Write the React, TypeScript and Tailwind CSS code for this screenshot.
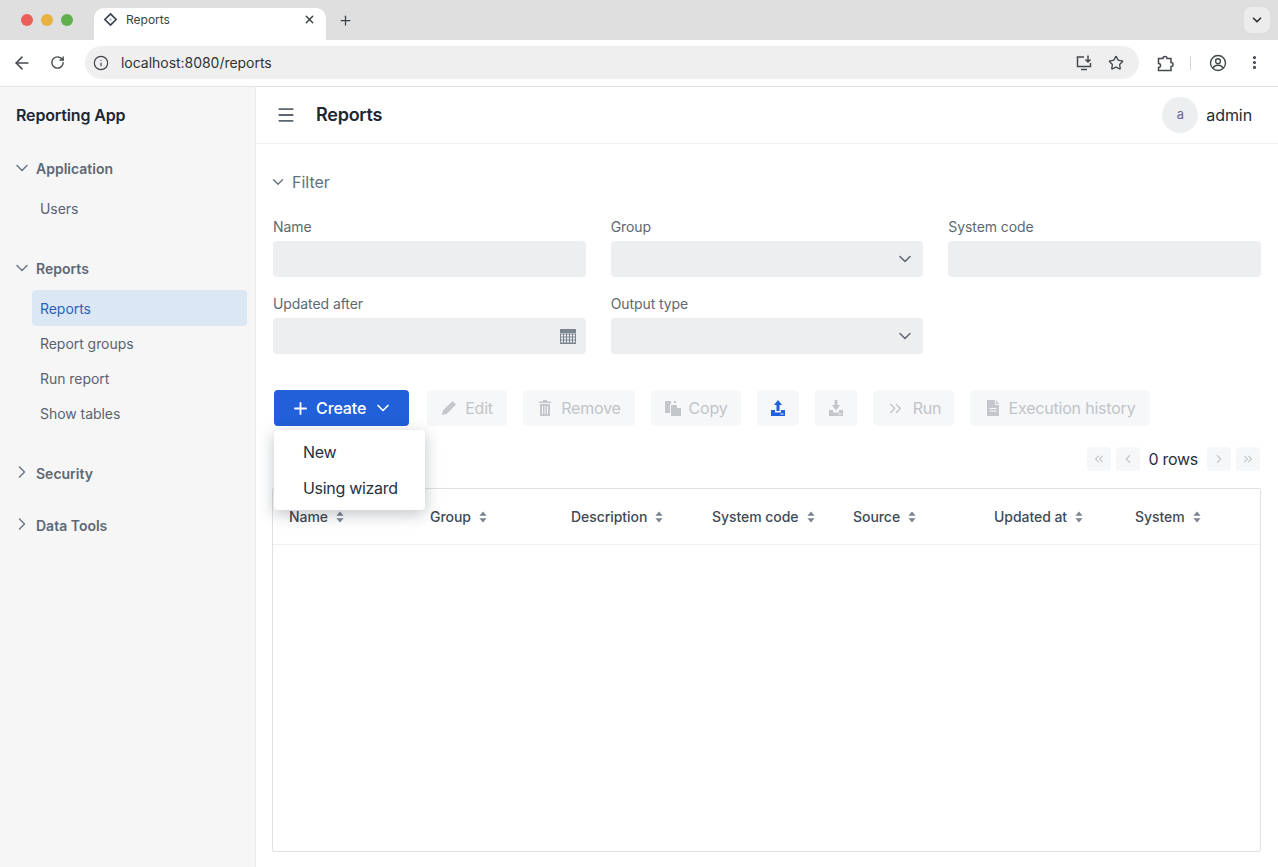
import React from "react";
import { ArrowLeft, RotateCw, Info, Star, EllipsisVertical, X, Plus, ChevronDown, ChevronRight, ChevronLeft, ChevronsLeft, ChevronsRight, Menu } from "lucide-react";

const Caret = ({ c = "" }: { c?: string }) => (
  <svg viewBox="0 0 8 12" className={"w-[8px] h-[12px] " + c} fill="#7b8591">
    <path d="M4 0.5 L7.6 4.8 H0.4 Z" />
    <path d="M4 11.5 L7.6 7.2 H0.4 Z" />
  </svg>
);

const NavGroup = ({ label, open, className = "" }: { label: string; open?: boolean; className?: string }) => (
  <div className={"flex items-center h-[24px] pl-[12px] " + className}>
    {open ? (
      <ChevronDown size={20} strokeWidth={1.75} className="text-[#6b7684] mr-[4px] shrink-0" />
    ) : (
      <ChevronRight size={20} strokeWidth={1.75} className="text-[#6b7684] mr-[4px] shrink-0 -mt-[3px]" />
    )}
    <span className="text-[14px] font-semibold text-[#5d6875]">{label}</span>
  </div>
);

const NavItem = ({ label, active }: { label: string; active?: boolean }) => (
  <div className={"ml-[32px] mr-[8px] pl-[8px] flex items-center rounded-[4px] text-[14px] tracking-[-0.05px] h-[36px] mb-[-1px] " + (active ? "bg-[#dce7f6] text-[#2b62bd]" : "text-[#59636f]")}>
    {label}
  </div>
);

const Field = ({ label, icon }: { label: string; icon?: React.ReactNode }) => (
  <div>
    <div className="text-[14px] leading-[20px] h-[24px] text-[#5e6874] tracking-[-0.08px]">{label}</div>
    <div className="h-[36px] bg-[#eceef0] rounded-[4px] flex items-center justify-end pr-[8px]">{icon}</div>
  </div>
);

const Calendar = () => (
  <svg viewBox="0 0 16 16" className="w-[16px] h-[16px] mr-[2px]" fill="#7c8590">
    <path d="M0 1h16v4H0z" />
    <path fillRule="evenodd" d="M0 5.5h16V16H0zM1 6.5v2h2v-2zm3 0v2h2v-2zm3 0v2h2v-2zm3 0v2h2v-2zm3 0v2h2v-2zM1 9.5v2h2v-2zm3 0v2h2v-2zm3 0v2h2v-2zm3 0v2h2v-2zm3 0v2h2v-2zM1 12.5v2h2v-2zm3 0v2h2v-2zm3 0v2h2v-2zm3 0v2h2v-2zm3 0v2h2v-2z" />
  </svg>
);

const Pen = () => (
  <svg viewBox="0 0 16 16" className="w-[16px] h-[16px]" fill="#c3c7cc"><path d="M11.5 1 15 4.5 5.5 14 1 15l1-4.5z" /></svg>
);
const Trash = () => (
  <svg viewBox="0 0 16 16" className="w-[16px] h-[16px]" fill="#c3c7cc"><path d="M6 0h4v1.5h4V3H2V1.5h4z" /><path fillRule="evenodd" d="M3 4h10v12H3zm2 2v8h1V6zm2.5 0v8h1V6zM10 6v8h1V6z" /></svg>
);
const Copy = () => (
  <svg viewBox="0 0 16 16" className="w-[16px] h-[16px]" fill="#c3c7cc"><path d="M0 1h6v3H5v9H0z" /><path d="M6 5h6v3h4v8H6z" /><path d="M9 1h2v2H9z" /></svg>
);
const Upload = ({ color }: { color: string }) => (
  <svg viewBox="0 0 16 16" className="w-[16px] h-[16px]" fill={color}><path d="M8 0 12 5H9.5v6h-3V5H4z" /><path fillRule="evenodd" d="M1 10h4v2.5h6V10h4v6H1zm9.5 3.5v1h3v-1z" /></svg>
);
const Download = ({ color }: { color: string }) => (
  <svg viewBox="0 0 16 16" className="w-[16px] h-[16px]" fill={color}><path d="M6.5 0h3v5H12L8 10.5 4 5h2.500z" /><path fillRule="evenodd" d="M1 10h4v2.500h6V10h4v6H1zm9.5 3.500v1h3v-1z" /></svg>
);
const FileIcon = () => (
  <svg viewBox="0 0 16 16" className="w-[16px] h-[16px]" fill="#c3c7cc"><path fillRule="evenodd" d="M2 0h8v5h4v11H2zm2.500 8v1h7V8zm0 2.500v1h7v-1zM11 0l3 4h-3z" /></svg>
);

const Tool = ({ icon, label, w }: { icon: React.ReactNode; label?: string; w: string }) => (
  <div className={"h-[36px] bg-[#f6f7f8] rounded-[4px] flex items-center justify-center gap-[8px] text-[16px] tracking-[-0.2px] text-[#c0c4c9] " + w}>
    {icon}
    {label && <span>{label}</span>}
  </div>
);

const Pg = ({ icon }: { icon: React.ReactNode }) => (
  <div className="w-[24px] h-[24px] bg-[#f6f7f8] rounded-[4px] flex items-center justify-center text-[#c3c7cc]">{icon}</div>
);

export default function App() {
  const cols = ["Name", "Group", "Description", "System code", "Source", "Updated at", "System"];
  return (
    <div className="h-screen w-full flex flex-col overflow-hidden bg-white text-[#1c2733]" style={{ fontFamily: "Inter, 'Liberation Sans', sans-serif" }}>
      {/* tab strip */}
      <div className="h-[40px] bg-[#dfdfdf] flex items-end shrink-0">
        <div className="flex items-center gap-[8px] pl-[21px] self-center">
          <div className="w-[12px] h-[12px] rounded-full bg-[#ec5f57]" />
          <div className="w-[12px] h-[12px] rounded-full bg-[#e9b13f]" />
          <div className="w-[12px] h-[12px] rounded-full bg-[#5fb14e]" />
        </div>
        <div className="ml-[21px] w-[232px] h-[32px] bg-white rounded-t-[10px] flex items-center pl-[9px] pr-[10px] pb-[9px]">
          <svg viewBox="0 0 16 16" className="w-[15px] h-[15px] shrink-0">
            <path d="M8 2 14 8 8 14 2 8Z" fill="none" stroke="#3a4150" strokeWidth="1.800" />
            <circle cx="8" cy="8" r="1.200" fill="#8fa8c8" />
          </svg>
          <span className="ml-[8px] text-[12px] text-[#3b3f44] flex-1">Reports</span>
          <X size={13} strokeWidth={2.5} className="text-[#3b3f44]" />
        </div>
        <Plus size={15} strokeWidth={2} className="ml-[12px] self-center text-[#3b3f44]" />
        <div className="ml-auto mr-[8px] self-center w-[26px] h-[26px] rounded-[8px] bg-[#ececec] flex items-center justify-center">
          <ChevronDown size={14} strokeWidth={3} className="text-[#2f3338]" />
        </div>
      </div>

      {/* browser toolbar */}
      <div className="h-[47px] bg-white border-b border-[#e3e3e3] flex items-center shrink-0 pb-[1px]">
        <ArrowLeft size={20} strokeWidth={1.9} className="ml-[12px] text-[#44484d]" />
        <RotateCw size={15} strokeWidth={2.2} className="ml-[18px] text-[#44484d]" />
        <div className="ml-[20px] h-[33px] w-[1054px] rounded-full bg-[#efefef] flex items-center pl-[8px] pr-[15px]">
          <Info size={16} strokeWidth={1.75} className="text-[#3f4347]" />
          <span className="ml-[12px] text-[14px] tracking-[-0.03px] text-[#2f3337] flex-1">localhost:8080/reports</span>
          <svg viewBox="0 0 18 18" className="w-[18px] h-[18px] text-[#44484d]" fill="none" stroke="currentColor" strokeWidth="1.500">
            <path d="M9 3H2.500v9.500h13V9" />
            <path d="M6 15.500h6" />
            <path d="M13 1.500v6M10.500 5.500 13 8l2.500-2.500" />
          </svg>
          <Star size={16} strokeWidth={2} className="ml-[15px] text-[#44484d]" />
        </div>
        <svg viewBox="0 0 18 18" className="ml-[17px] w-[18px] h-[18px] text-[#44484d]" fill="none" stroke="currentColor" strokeWidth="1.500">
          <path d="M2.500 4.500h4.500a2 2 0 0 1 4 0h4v4a2 2 0 0 1 0 4v4H2.500v-3a2 2 0 0 0 0-4z" />
        </svg>
        <div className="ml-[16px] w-[1px] h-[14px] bg-[#d4d4d4]" />
        <svg viewBox="0 0 18 18" className="ml-[18px] w-[18px] h-[18px] text-[#44484d]" fill="none" stroke="currentColor" strokeWidth="1.400">
          <circle cx="9" cy="9" r="7.500" />
          <circle cx="9" cy="7.200" r="2.400" />
          <path d="M4 14c1-2.200 3-2.800 5-2.800s4 .6 5 2.800" />
        </svg>
        <EllipsisVertical size={17} strokeWidth={2.5} className="ml-[19px] text-[#44484d]" />
      </div>

      <div className="flex-1 flex min-h-0">
        {/* sidebar */}
        <aside className="w-[256px] shrink-0 bg-[#f6f6f7] border-r border-[#e8eaec]">
          <div className="h-[56px] flex items-center pl-[16px] text-[16px] font-semibold tracking-[-0.15px] text-[#1c2733]">Reporting App</div>
          <NavGroup label="Application" open className="mt-[13px]" />
          <div className="mt-[10px]"><NavItem label="Users" /></div>
          <NavGroup label="Reports" open className="mt-[31px]" />
          <div className="mt-[10px]">
            <NavItem label="Reports" active />
            <NavItem label="Report groups" />
            <NavItem label="Run report" />
            <NavItem label="Show tables" />
          </div>
          <NavGroup label="Security" className="mt-[31px]" />
          <NavGroup label="Data Tools" className="mt-[28px]" />
        </aside>

        {/* main */}
        <main className="flex-1 min-w-0 flex flex-col">
          <header className="h-[57px] shrink-0 border-b border-[#eff0f2] flex items-center pl-[20px] pr-[26px]">
            <Menu size={20} strokeWidth={2.2} className="text-[#5d6670]" />
            <h1 className="ml-[20px] text-[18px] font-semibold tracking-[-0.25px] text-[#1c2733] flex-1 pb-[1px]">Reports</h1>
            <div className="w-[36px] h-[36px] rounded-full bg-[#eceef0] flex items-center justify-center text-[13px] text-[#66707c]">a</div>
            <span className="ml-[8px] text-[16px] tracking-[-0.1px] text-[#1f2a36]">admin</span>
          </header>

          <div className="flex-1 min-h-0 flex flex-col pl-[17px] pr-[17px] pb-[15px]">
            <div className="mt-[26px] h-[24px] flex items-center text-[16px] text-[#66707c]">
              <ChevronDown size={18} strokeWidth={1.75} className="mr-[5px] ml-[-4px] text-[#66707c]" />
              Filter
            </div>
            <div className="mt-[23px] grid grid-cols-3 gap-x-[25px] gap-y-[17px]">
              <Field label="Name" />
              <Field label="Group" icon={<ChevronDown size={20} strokeWidth={1.9} className="text-[#5f6975]" />} />
              <Field label="System code" />
              <Field label="Updated after" icon={<Calendar />} />
              <Field label="Output type" icon={<ChevronDown size={20} strokeWidth={1.9} className="text-[#5f6975]" />} />
            </div>

            <div className="mt-[36px] ml-[1px] flex gap-[16px]">
              <div className="relative mr-[2px]">
                <div className="w-[135px] h-[36px] rounded-[4px] bg-[#2160d8] text-white flex items-center pl-[17px] text-[16px] font-medium tracking-[-0.1px]">
                  <Plus size={19} strokeWidth={2.3} />
                  <span className="ml-[6px]">Create</span>
                  <ChevronDown size={20} strokeWidth={2} className="ml-[7px]" />
                </div>
                <div className="absolute left-0 top-[40px] w-[151px] h-[80px] bg-white rounded-[4px] shadow-[0_4px_16px_rgba(30,40,55,0.28)] z-10 py-[4px] text-[16px] tracking-[-0.3px] text-[#27313c]">
                  <div className="h-[36px] flex items-center pl-[29px]">New</div>
                  <div className="h-[36px] flex items-center pl-[29px]">Using wizard</div>
                </div>
              </div>
              <Tool icon={<Pen />} label="Edit" w="w-[80px]" />
              <Tool icon={<Trash />} label="Remove" w="w-[112px]" />
              <Tool icon={<Copy />} label="Copy" w="w-[90px]" />
              <Tool icon={<Upload color="#2160d8" />} w="w-[42px]" />
              <Tool icon={<Download color="#c3c7cc" />} w="w-[42px]" />
              <Tool icon={<ChevronsRight size={19} strokeWidth={1.6} />} label="Run" w="w-[81px]" />
              <Tool icon={<FileIcon />} label="Execution history" w="w-[180px]" />
            </div>

            <div className="mt-[21px] h-[24px] flex items-center justify-end gap-[5px] pr-[1px]">
              <Pg icon={<ChevronsLeft size={14} />} />
              <Pg icon={<ChevronLeft size={14} />} />
              <span className="text-[16px] tracking-[-0.3px] text-[#27313c] mx-[4px]">0 rows</span>
              <Pg icon={<ChevronRight size={14} />} />
              <Pg icon={<ChevronsRight size={14} />} />
            </div>

            <div className="mt-[17px] ml-[-1px] flex-1 min-h-0 border border-[#dfe1e4] rounded-[2px]">
              <div className="h-[56px] border-b border-[#eff0f2] grid grid-cols-7">
                {cols.map((c) => (
                  <div key={c} className="flex items-center pl-[16px] gap-[8px] text-[14px] font-medium tracking-[-0.05px] text-[#3f4a57]">
                    <span>{c}</span>
                    <Caret />
                  </div>
                ))}
              </div>
            </div>
          </div>
        </main>
      </div>
    </div>
  );
}
